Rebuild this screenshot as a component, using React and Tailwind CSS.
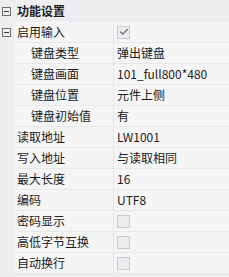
import { Check } from "lucide-react";

const rows = [
  { label: "启用输入", value: "check-on", toggle: true },
  { label: "键盘类型", value: "弹出键盘", indent: true },
  { label: "键盘画面", value: "101_full800*480", indent: true },
  { label: "键盘位置", value: "元件上侧", indent: true },
  { label: "键盘初始值", value: "有", indent: true },
  { label: "读取地址", value: "LW1001" },
  { label: "写入地址", value: "与读取相同" },
  { label: "最大长度", value: "16" },
  { label: "编码", value: "UTF8" },
  { label: "密码显示", value: "check-off" },
  { label: "高低字节互换", value: "check-off" },
  { label: "自动换行", value: "check-off" },
];

function Minus() {
  return (
    <div className="w-[9px] h-[9px] border border-[#6e6e6e] flex items-center justify-center">
      <div className="w-[5px] h-px bg-[#3a3a3a]" />
    </div>
  );
}

function Box({ on }) {
  return (
    <div className="w-[13px] h-[13px] border border-[#cacad4] bg-[#ebebf0] flex items-center justify-center">
      {on && <Check size={10} strokeWidth={3} className="text-[#6a6a72]" />}
    </div>
  );
}

export default function App() {
  return (
    <div
      className="w-[229px] h-[277px] bg-[#eeeef0] text-[12px] leading-none text-[#1b1b1b] overflow-hidden"
      style={{ fontFamily: '"Noto Sans CJK SC", "Noto Sans", sans-serif' }}
    >
      <div className="h-[22px] flex items-center">
        <div className="w-[17px] pl-[2px]">
          <Minus />
        </div>
        <span className="font-bold">功能设置</span>
      </div>
      {rows.map((r) => (
        <div key={r.label} className="h-[21px] flex">
          <div className="w-[14px] pl-[2px] flex items-center">
            {r.toggle && <Minus />}
          </div>
          <div className="flex-1 flex bg-[#f5f5f5] border-b border-[#e8e8e8]">
            <div
              className={
                "w-[100px] flex items-center border-r border-[#e4e4e4] " +
                (r.indent ? "pl-[17px]" : "pl-[3px]")
              }
            >
              {r.label}
            </div>
            <div className="flex-1 flex items-center pl-[3px]">
              {r.value === "check-on" ? (
                <Box on />
              ) : r.value === "check-off" ? (
                <Box />
              ) : (
                r.value
              )}
            </div>
          </div>
        </div>
      ))}
    </div>
  );
}
